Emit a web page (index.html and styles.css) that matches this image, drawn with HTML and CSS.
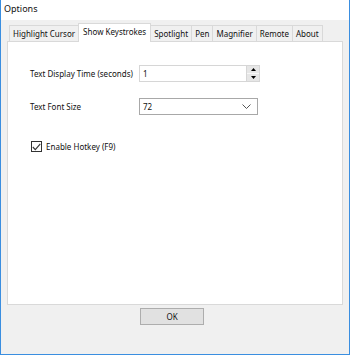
FILE: index.html
```html
<!DOCTYPE html>
<html>
<head>
<meta charset="utf-8">
<link rel="stylesheet" href="styles.css">
</head>
<body>
<div class="window">
  <div class="titlebar">Options</div>
  <div class="client">
    <div class="tabs">
      <div class="tab">Highlight Cursor</div>
      <div class="tab active">Show Keystrokes</div>
      <div class="tab">Spotlight</div>
      <div class="tab">Pen</div>
      <div class="tab">Magnifier</div>
      <div class="tab">Remote</div>
      <div class="tab">About</div>
    </div>
    <div class="panel">
      <div class="form">
        <label class="lbl">Text Display Time (seconds)</label>
        <div class="spin">
          <span class="val">1</span>
          <div class="arrows">
            <div class="arr"><svg width="5" height="3" viewBox="0 0 5 3"><path d="M2.5 0L5 3H0z" fill="#000"/></svg></div>
            <div class="arr"><svg width="5" height="3" viewBox="0 0 5 3"><path d="M0 0H5L2.5 3z" fill="#000"/></svg></div>
          </div>
        </div>
        <label class="lbl">Text Font Size</label>
        <div class="combo">
          <span class="val">72</span>
          <svg class="chev" width="9" height="5" viewBox="0 0 9 5"><path d="M0.5 0.5L4.5 4.5L8.5 0.5" fill="none" stroke="#555" stroke-width="1"/></svg>
        </div>
      </div>
      <div class="check">
        <span class="box"><svg width="9" height="8" viewBox="0 0 9 8"><path d="M0.8 4L3.3 6.6L8.3 0.8" fill="none" stroke="#333" stroke-width="1.1"/></svg></span>
        <span>Enable Hotkey (F9)</span>
      </div>
    </div>
    <div class="footer">
      <div class="btn">OK</div>
    </div>
  </div>
</div>
</body>
</html>
```

FILE: styles.css
```css
html, body {
  margin: 0;
  padding: 0;
}
body {
  font-family: "Noto Sans", "DejaVu Sans", sans-serif;
  font-size: 8px;
  color: #111;
  background: #fff;
}
.window {
  width: 350px;
  height: 355px;
  box-sizing: border-box;
  border: 1px solid #3a8ee0;
  border-top: none;
  display: flex;
  flex-direction: column;
}
.titlebar {
  height: 20px;
  background: #fff;
  padding-left: 3px;
  font-size: 9px;
  line-height: 18px;
  flex: none;
}
.client {
  flex: 1;
  background: #f0f0f0;
  display: flex;
  flex-direction: column;
  padding: 4px 6px 0 6px;
}
.tabs {
  display: flex;
  align-items: flex-end;
  height: 17px;
  padding-left: 2px;
  position: relative;
  z-index: 1;
}
.tab {
  height: 16px;
  box-sizing: border-box;
  border: 1px solid #d9d9d9;
  border-bottom: none;
  border-right: none;
  background: #f0f0f0;
  padding: 0 3px;
  line-height: 15px;
  white-space: nowrap;
}
.tab:last-child {
  border-right: 1px solid #d9d9d9;
}
.tab.active {
  height: 19px;
  background: #fff;
  border-right: 1px solid #d9d9d9;
  margin-bottom: -1px;
  padding: 0 4px;
  line-height: 16px;
}
.tab.active + .tab {
  border-left: none;
}
.panel {
  height: 264px;
  box-sizing: border-box;
  background: #fff;
  border: 1px solid #d9d9d9;
  padding: 23px 0 0 22px;
  flex: none;
}
.form {
  display: grid;
  grid-template-columns: 109px 120px;
  grid-template-rows: 17px 17px;
  row-gap: 16px;
  align-items: center;
}
.lbl {
  white-space: nowrap;
}
.spin, .combo {
  height: 17px;
  box-sizing: border-box;
  background: #fff;
  display: flex;
  align-items: center;
  position: relative;
}
.spin {
  border: 1px solid #d6d6d6;
  width: 121px;
}
.combo {
  border: 1px solid #a8a8a8;
  width: 119px;
}
.val {
  padding-left: 3px;
  flex: 1;
  line-height: 15px;
}
.arrows {
  width: 12px;
  height: 15px;
  display: flex;
  flex-direction: column;
  border-left: 1px solid #d6d6d6;
}
.arr {
  flex: 1;
  background: #e6e6e6;
  display: flex;
  align-items: center;
  justify-content: center;
}
.arr + .arr {
  border-top: 1px solid #f7f7f7;
}
.chev {
  margin-right: 6px;
}
.check {
  display: flex;
  align-items: center;
  margin-top: 26px;
  margin-left: 1px;
  gap: 4px;
}
.box {
  width: 11px;
  height: 11px;
  box-sizing: border-box;
  border: 1px solid #333;
  background: #fff;
  display: flex;
  align-items: center;
  justify-content: center;
}
.footer {
  display: flex;
  padding-left: 133px;
  padding-top: 3px;
}
.btn {
  width: 64px;
  height: 17px;
  box-sizing: border-box;
  border: 1px solid #adadad;
  background: #e1e1e1;
  text-align: center;
  line-height: 15px;
}
```
